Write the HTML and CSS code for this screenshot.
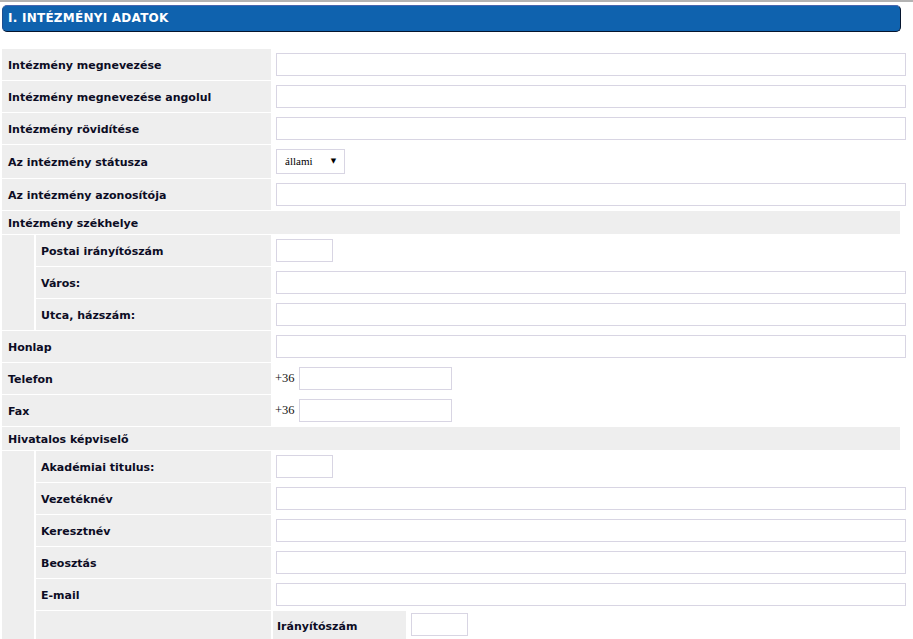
FILE: index.html
```html
<!DOCTYPE html>
<html lang="hu">
<head>
<meta charset="utf-8">
<title>Intézményi adatok</title>
<link rel="stylesheet" href="styles.css">
</head>
<body>
<div class="topline"></div>
<h2 class="section-title">I. INTÉZMÉNYI ADATOK</h2>
<table class="form">
  <colgroup><col class="c-indent"><col class="c-label"><col></colgroup>
  <tr><td class="lbl" colspan="2">Intézmény megnevezése</td><td class="fld"><input class="txt wide" type="text"></td></tr>
  <tr><td class="lbl" colspan="2">Intézmény megnevezése angolul</td><td class="fld"><input class="txt wide" type="text"></td></tr>
  <tr><td class="lbl" colspan="2">Intézmény rövidítése</td><td class="fld"><input class="txt wide" type="text"></td></tr>
  <tr><td class="lbl" colspan="2">Az intézmény státusza</td><td class="fld"><span class="sel-wrap"><select class="sel"><option>állami</option></select><span class="arrow">▼</span></span></td></tr>
  <tr><td class="lbl" colspan="2">Az intézmény azonosítója</td><td class="fld"><input class="txt wide" type="text"></td></tr>
  <tr><td class="lbl head" colspan="3">Intézmény székhelye</td></tr>
  <tr><td class="indent" rowspan="3"></td><td class="lbl sub">Postai irányítószám</td><td class="fld"><input class="txt small" type="text"></td></tr>
  <tr><td class="lbl sub">Város:</td><td class="fld"><input class="txt wide" type="text"></td></tr>
  <tr><td class="lbl sub">Utca, házszám:</td><td class="fld"><input class="txt wide" type="text"></td></tr>
  <tr><td class="lbl" colspan="2">Honlap</td><td class="fld"><input class="txt wide" type="text"></td></tr>
  <tr><td class="lbl" colspan="2">Telefon</td><td class="fld"><span class="prefix">+36</span><input class="txt phone" type="text"></td></tr>
  <tr><td class="lbl" colspan="2">Fax</td><td class="fld"><span class="prefix">+36</span><input class="txt phone" type="text"></td></tr>
  <tr><td class="lbl head" colspan="3">Hivatalos képviselő</td></tr>
  <tr><td class="indent" rowspan="6"></td><td class="lbl sub">Akadémiai titulus:</td><td class="fld"><input class="txt small" type="text"></td></tr>
  <tr><td class="lbl sub">Vezetéknév</td><td class="fld"><input class="txt wide" type="text"></td></tr>
  <tr><td class="lbl sub">Keresztnév</td><td class="fld"><input class="txt wide" type="text"></td></tr>
  <tr><td class="lbl sub">Beosztás</td><td class="fld"><input class="txt wide" type="text"></td></tr>
  <tr><td class="lbl sub">E-mail</td><td class="fld"><input class="txt wide" type="text"></td></tr>
  <tr><td class="lbl sub"></td><td class="fld nested">
    <div class="subrow"><div class="sublabel">Irányítószám</div><input class="txt small subinput" type="text"></div>
  </td></tr>
</table>
</body>
</html>
```
FILE: styles.css
```css
html, body {
  margin: 0;
  padding: 0;
  background: #ffffff;
}
body {
  font-family: "DejaVu Sans", Verdana, sans-serif;
  color: #0c0c24;
}
.topline {
  height: 2px;
  background: #b3b3b3;
}
.section-title {
  margin: 3px 12px 0 2px;
  height: 27px;
  box-sizing: border-box;
  background: #0f62ae;
  border: 1px solid #1b4f92;
  border-top-color: #4866ad;
  border-bottom-color: #06152e;
  border-right-color: #06152e;
  border-radius: 5px;
  color: #ffffff;
  font: bold 12px/25px "DejaVu Sans", Verdana, sans-serif;
  letter-spacing: 0.25px;
  padding-left: 5px;
}
.form {
  margin-top: 16px;
  width: 902px;
  table-layout: fixed;
  border-collapse: separate;
  border-spacing: 2px 1px;
}
.c-indent { width: 32px; }
.c-label { width: 235px; }
.form td {
  padding: 0;
  vertical-align: middle;
}
.lbl {
  background: #eeeeee;
  font-size: 11px;
  font-weight: bold;
  padding: 1px 6px 0 6px !important;
  height: 31px;
  box-sizing: border-box;
  white-space: nowrap;
}
.lbl.head {
  height: 23px;
}
.lbl.sub {
  padding-left: 5px !important;
}
.indent {
  background: #eeeeee;
}
.form td.fld {
  padding: 4px 0 4px 3px;
  white-space: nowrap;
}
.txt {
  box-sizing: border-box;
  height: 23px;
  border: 1px solid #d8d5e3;
  background: #ffffff;
  margin: 0;
  padding: 0 3px;
  vertical-align: middle;
  font: 12px "Liberation Serif", serif;
}
.wide { width: 630px; }
.small { width: 57px; }
.phone { width: 153px; }
.prefix {
  font: 12.5px "Liberation Serif", serif;
  color: #111;
  vertical-align: middle;
  margin: 0 4px 0 -1px;
}
.sel-wrap {
  position: relative;
  display: inline-block;
  vertical-align: middle;
}
.sel {
  appearance: none;
  -webkit-appearance: none;
  box-sizing: border-box;
  width: 69px;
  height: 25px;
  border: 1px solid #d8d5e3;
  background: #ffffff;
  border-radius: 0;
  margin: 0;
  padding: 0 0 2px 8px;
  font: 11px "Liberation Serif", serif;
  color: #000;
  display: block;
}
.arrow {
  position: absolute;
  right: 9px;
  top: 8px;
  font-size: 7px;
  line-height: 8px;
  color: #000;
  pointer-events: none;
}
.form td.fld.nested {
  padding: 0;
  height: 28px;
  vertical-align: top;
}
.subrow {
  display: flex;
  align-items: flex-start;
}
.sublabel {
  width: 133px;
  height: 31px;
  line-height: 32px;
  background: #eeeeee;
  font-size: 11px;
  font-weight: bold;
  padding-left: 4px;
  box-sizing: border-box;
}
.subinput {
  margin: 2px 0 0 5px;
}
```
